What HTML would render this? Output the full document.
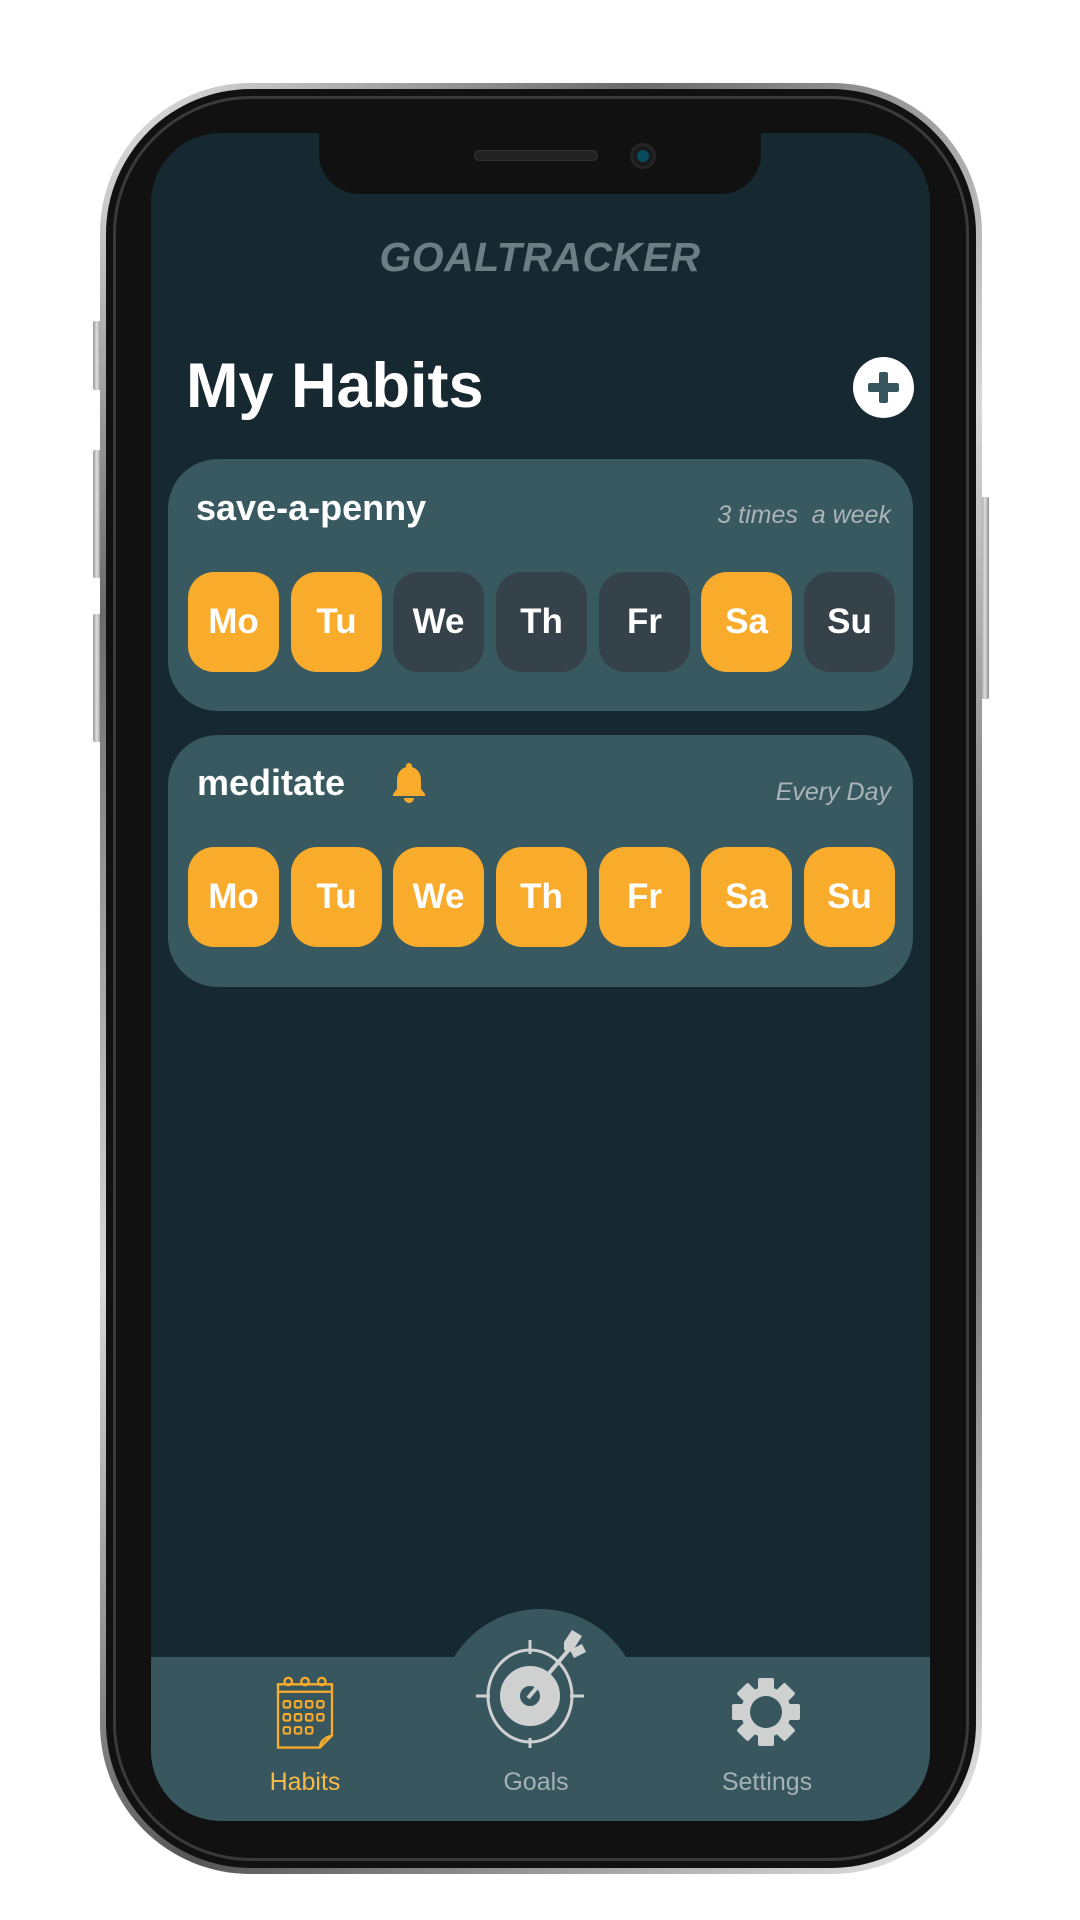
<!DOCTYPE html>
<html><head><meta charset="utf-8"><style>
*{margin:0;padding:0;box-sizing:border-box}
body{width:1080px;height:1920px;background:#fff;position:relative;overflow:hidden;font-family:"Liberation Sans",sans-serif}
.abs{position:absolute}
.btn{position:absolute;background:linear-gradient(90deg,#9a9a9a,#e0e0e0,#8a8a8a);border-radius:2px}
.frame{left:100px;top:83px;width:882px;height:1791px;border-radius:150px;background:linear-gradient(135deg,#e8e8e8,#6a6a6a 20%,#d8d8d8 45%,#555 70%,#eee);}
.frame2{left:106px;top:89px;width:870px;height:1779px;border-radius:145px;background:#111;}
.frame3{left:113px;top:96px;width:856px;height:1765px;border-radius:138px;border:3px solid #3a3a3a;}
.screen{left:151px;top:133px;width:779px;height:1688px;border-radius:70px;background:#172930;overflow:hidden}
.notch{left:319px;top:120px;width:442px;height:74px;background:#111;border-radius:0 0 40px 40px}
.title{left:0;width:1080px;top:234px;text-align:center;font-weight:bold;font-style:italic;font-size:41px;color:#6b7e84;letter-spacing:0.5px}
.h1{left:186px;top:350px;font-size:63px;font-weight:bold;color:#fff}
.card{left:168px;width:745px;height:252px;border-radius:50px;background:#395961}
.name{font-size:36px;font-weight:bold;color:#fff}
.freq{font-size:25px;font-style:italic;color:#aab4b7;right:22px}
.day{position:absolute;width:91px;height:100px;border-radius:26px;color:#fff;font-weight:bold;font-size:35px;text-align:center;line-height:100px}
.o{background:#f9ab2c}.d{background:#354249}
.lbl{position:absolute;top:1768px;font-size:25px;width:200px;text-align:center;color:#a5b1b4}
</style></head><body>
<div class="btn" style="left:93px;top:321px;width:8px;height:69px"></div>
<div class="btn" style="left:93px;top:450px;width:8px;height:128px"></div>
<div class="btn" style="left:93px;top:614px;width:8px;height:128px"></div>
<div class="btn" style="left:981px;top:497px;width:8px;height:202px"></div>
<div class="abs frame"></div>
<div class="abs frame2"></div>
<div class="abs frame3"></div>
<div class="abs screen">
 <div class="abs" style="left:0;top:1524px;width:779px;height:170px;background:#37565e"></div>
 <div class="abs" style="left:288px;top:1476px;width:202px;height:202px;border-radius:50%;background:#37565e"></div>
</div>
<div class="abs notch"></div>
<div class="abs" style="left:474px;top:150px;width:124px;height:11px;border-radius:6px;background:#222;border:1px solid #333"></div>
<div class="abs" style="left:630px;top:143px;width:26px;height:26px;border-radius:50%;background:#1a1a1a;border:3px solid #252525"></div>
<div class="abs" style="left:637px;top:150px;width:12px;height:12px;border-radius:50%;background:#0a4a5e"></div>
<div class="abs title">GOALTRACKER</div>
<div class="abs h1">My Habits</div>
<div class="abs" style="left:853px;top:357px;width:61px;height:61px;border-radius:50%;background:#fff"></div>
<div class="abs" style="left:868px;top:383px;width:31px;height:9px;background:#37565e;border-radius:2px"></div>
<div class="abs" style="left:879px;top:372px;width:9px;height:31px;background:#37565e;border-radius:2px"></div>

<div class="abs card" style="top:459px">
 <div class="abs name" style="left:28px;top:28px">save-a-penny</div>
 <div class="abs freq" style="top:42px">3 times&nbsp; a week</div>
 <div class="day o" style="left:20px;top:113px">Mo</div>
 <div class="day o" style="left:123px;top:113px">Tu</div>
 <div class="day d" style="left:225px;top:113px">We</div>
 <div class="day d" style="left:328px;top:113px">Th</div>
 <div class="day d" style="left:431px;top:113px">Fr</div>
 <div class="day o" style="left:533px;top:113px">Sa</div>
 <div class="day d" style="left:636px;top:113px">Su</div>
</div>
<div class="abs card" style="top:735px">
 <div class="abs name" style="left:29px;top:27px">meditate</div>
 <svg class="abs" style="left:222px;top:26px" width="38" height="42" viewBox="0 0 38 42"><path d="M19 2a3 3 0 0 1 3 3v1c6 2 9 7 9 13v9l4 5v2H3v-2l4-5v-9c0-6 3-11 9-13V5a3 3 0 0 1 3-3z" fill="#f9ab2c"/><path d="M14 37h10a5 5 0 0 1-10 0z" fill="#f9ab2c"/></svg>
 <div class="abs freq" style="top:43px">Every Day</div>
 <div class="day o" style="left:20px;top:112px">Mo</div>
 <div class="day o" style="left:123px;top:112px">Tu</div>
 <div class="day o" style="left:225px;top:112px">We</div>
 <div class="day o" style="left:328px;top:112px">Th</div>
 <div class="day o" style="left:431px;top:112px">Fr</div>
 <div class="day o" style="left:533px;top:112px">Sa</div>
 <div class="day o" style="left:636px;top:112px">Su</div>
</div>

<!-- calendar icon -->
<svg class="abs" style="left:270px;top:1675px" width="70" height="80" viewBox="0 0 70 86" fill="none" stroke="#f9ab2c" stroke-width="2.5">
 <path d="M6 76V10h58v55L51 78H6z"/><path d="M6 18h58"/><path d="M51 78c0-6 5-11 13-13"/>
 <circle cx="17" cy="7" r="4"/><circle cx="35" cy="7" r="4"/><circle cx="53" cy="7" r="4"/>
 <g stroke-width="2.2">
 <rect x="12" y="28" width="7" height="7" rx="1.5"/><rect x="24" y="28" width="7" height="7" rx="1.5"/><rect x="36" y="28" width="7" height="7" rx="1.5"/><rect x="48" y="28" width="7" height="7" rx="1.5"/>
 <rect x="12" y="42" width="7" height="7" rx="1.5"/><rect x="24" y="42" width="7" height="7" rx="1.5"/><rect x="36" y="42" width="7" height="7" rx="1.5"/><rect x="48" y="42" width="7" height="7" rx="1.5"/>
 <rect x="12" y="56" width="7" height="7" rx="1.5"/><rect x="24" y="56" width="7" height="7" rx="1.5"/><rect x="36" y="56" width="7" height="7" rx="1.5"/>
 </g>
</svg>
<!-- target icon -->
<svg class="abs" style="left:476px;top:1624px" width="120" height="124" viewBox="0 0 120 124" fill="none" stroke="#cfd1d1">
 <ellipse cx="54" cy="72" rx="42" ry="46" stroke-width="3"/>
 <path d="M54 16v14M54 114v14M0 72h14M94 72h14" stroke-width="3"/>
 <circle cx="54" cy="72" r="20" stroke="#cfd1d1" stroke-width="20"/>
 <path d="M52 74L96 22" stroke="#cfd1d1" stroke-width="4"/>
 <path d="M88 18l8-12 10 6-10 16-8-2z" fill="#cfd1d1" stroke="none"/>
 <path d="M94 26l12-6 4 8-12 6z" fill="#cfd1d1" stroke="none"/>
</svg>
<!-- gear -->
<svg class="abs" style="left:731px;top:1676px" width="70" height="72" viewBox="-35 -36 70 72">
 <g fill="#cfd1d1">
 <circle r="25"/>
 <g id="t"><rect x="-8" y="-34" width="16" height="14" rx="2"/></g>
 <use href="#t" transform="rotate(45)"/><use href="#t" transform="rotate(90)"/><use href="#t" transform="rotate(135)"/><use href="#t" transform="rotate(180)"/><use href="#t" transform="rotate(225)"/><use href="#t" transform="rotate(270)"/><use href="#t" transform="rotate(315)"/>
 </g>
 <circle r="16" fill="#37565e"/>
</svg>
<div class="lbl" style="left:205px;color:#f9ba45">Habits</div>
<div class="lbl" style="left:436px">Goals</div>
<div class="lbl" style="left:667px">Settings</div>
</body></html>
